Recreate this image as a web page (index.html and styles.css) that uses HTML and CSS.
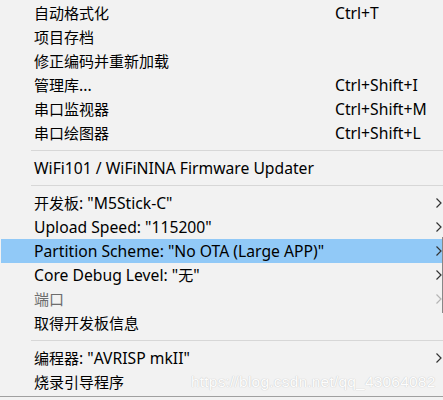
FILE: index.html
```html
<!DOCTYPE html>
<html lang="zh">
<head>
<meta charset="utf-8">
<title>Menu</title>
<link rel="stylesheet" href="styles.css">
</head>
<body>
<div class="menu">
  <div class="item"><span class="label"><span class="zh">自动格式化</span></span><span class="key">Ctrl+T</span></div>
  <div class="item"><span class="label"><span class="zh">项目存档</span></span></div>
  <div class="item"><span class="label"><span class="zh">修正编码并重新加载</span></span></div>
  <div class="item"><span class="label"><span class="zh">管理库</span>...</span><span class="key">Ctrl+Shift+I</span></div>
  <div class="item"><span class="label"><span class="zh">串口监视器</span></span><span class="key">Ctrl+Shift+M</span></div>
  <div class="item"><span class="label"><span class="zh">串口绘图器</span></span><span class="key">Ctrl+Shift+L</span></div>
  <div class="sep"></div>
  <div class="item"><span class="label">WiFi101 / WiFiNINA Firmware Updater</span></div>
  <div class="sep"></div>
  <div class="item"><span class="label"><span class="zh">开发板</span>: "M5Stick-C"</span><span class="arrow"><svg viewBox="0 0 6 10" width="6" height="10"><path d="M0.5 0.5 L5 5 L0.5 9.5" fill="none" stroke="currentColor" stroke-width="1.2"/></svg></span></div>
  <div class="item"><span class="label">Upload Speed: "115200"</span><span class="arrow"><svg viewBox="0 0 6 10" width="6" height="10"><path d="M0.5 0.5 L5 5 L0.5 9.5" fill="none" stroke="currentColor" stroke-width="1.2"/></svg></span></div>
  <div class="item active"><span class="label">Partition Scheme: "No OTA (Large APP)"</span><span class="arrow"><svg viewBox="0 0 6 10" width="6" height="10"><path d="M0.5 0.5 L5 5 L0.5 9.5" fill="none" stroke="currentColor" stroke-width="1.2"/></svg></span></div>
  <div class="item"><span class="label">Core Debug Level: "<span class="zh">无</span>"</span><span class="arrow"><svg viewBox="0 0 6 10" width="6" height="10"><path d="M0.5 0.5 L5 5 L0.5 9.5" fill="none" stroke="currentColor" stroke-width="1.2"/></svg></span></div>
  <div class="item disabled"><span class="label"><span class="zh">端口</span></span><span class="arrow"><svg viewBox="0 0 6 10" width="6" height="10"><path d="M0.5 0.5 L5 5 L0.5 9.5" fill="none" stroke="currentColor" stroke-width="1.2"/></svg></span></div>
  <div class="item"><span class="label"><span class="zh">取得开发板信息</span></span></div>
  <div class="sep"></div>
  <div class="item"><span class="label"><span class="zh">编程器</span>: "AVRISP mkII"</span><span class="arrow"><svg viewBox="0 0 6 10" width="6" height="10"><path d="M0.5 0.5 L5 5 L0.5 9.5" fill="none" stroke="currentColor" stroke-width="1.2"/></svg></span></div>
  <div class="item"><span class="label"><span class="zh">烧录引导程序</span></span></div>
</div>
<div class="edge"></div>
<div class="watermark">https://blog.csdn.net/qq_43064082</div>
</body>
</html>
```
FILE: styles.css
```css
html, body {
  margin: 0;
  padding: 0;
  background: #f2f2f2;
}
body {
  width: 443px;
  height: 400px;
  position: relative;
  overflow: hidden;
  font-family: "Noto Sans", "Noto Sans CJK SC", sans-serif;
  font-size: 15.7px;
  color: #000;
}
.zh {
  font-family: "Noto Sans CJK SC", sans-serif;
  font-size: 15px;
}
.menu {
  display: flex;
  flex-direction: column;
  padding-top: 1px;
  height: 397px;
  box-sizing: border-box;
  border-bottom: 1px solid #a0a0a0;
}
.item {
  display: flex;
  align-items: center;
  height: 24px;
  margin-left: 1px;
  padding-left: 33px;
  white-space: nowrap;
  line-height: 24px;
}
.label {
  flex: 0 0 301px;
}
.key {
  flex: none;
}
.arrow {
  margin-left: auto;
  width: 7px;
  display: flex;
  color: #333;
}
.active {
  background: #91c9f7;
}
.disabled {
  color: #6d6d6d;
}
.disabled .arrow {
  color: #b5b5b5;
}
.sep {
  height: 1px;
  background: #d7d7d7;
  margin: 5px 0 5px 31px;
}
.edge {
  position: absolute;
  left: 442px;
  top: 237px;
  width: 1px;
  height: 76px;
  background: #888;
}
.watermark {
  position: absolute;
  left: 191px;
  top: 373px;
  font-family: "Liberation Sans", sans-serif;
  font-size: 15.5px;
  letter-spacing: 0.2px;
  color: #fdfdfd;
  text-shadow: 0 0 1px #c8c8c8, 0 0 1px #d0d0d0;
}
```
